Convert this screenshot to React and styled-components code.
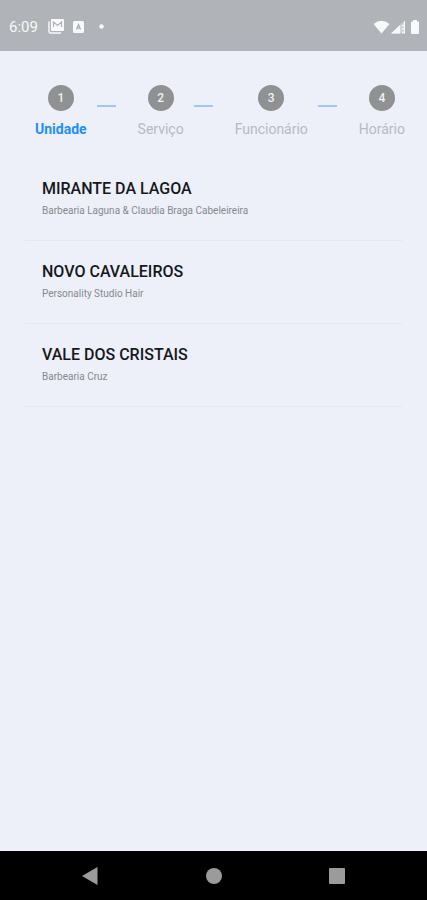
import React, { Fragment } from "react";
import styled, { createGlobalStyle } from "styled-components";

const GlobalStyle = createGlobalStyle`
  * { box-sizing: border-box; }
  body {
    margin: 0;
    background: #edf0f8;
    font-family: Roboto, "Liberation Sans", sans-serif;
  }
`;

const Screen = styled.div`
  display: flex;
  flex-direction: column;
  min-height: 100vh;
  background: #edf0f8;
`;

const StatusBar = styled.header`
  display: flex;
  align-items: center;
  justify-content: space-between;
  height: 51px;
  padding: 2px 7px 0 9px;
  background: #b0b3b7;
  color: #f8f9fa;
`;

const StatusGroup = styled.div`
  display: flex;
  align-items: center;
  gap: ${(p) => p.$gap}px;
`;

const Clock = styled.time`
  margin-right: 1px;
  font-size: 15px;
  line-height: 18px;
`;

const Icon = styled.svg`
  display: block;
  flex: none;
  fill: currentColor;
`;

const Main = styled.main`
  flex: 1;
`;

const Stepper = styled.nav`
  display: flex;
  padding: 34px 22px 0 35px;
`;

const Step = styled.button`
  display: flex;
  flex-direction: column;
  align-items: center;
  gap: 9px;
  padding: 0;
  border: 0;
  background: none;
  font-family: inherit;
  font-size: 14px;
  line-height: 18px;
  font-weight: ${(p) => (p.$active ? 700 : 400)};
  color: ${(p) => (p.$active ? "#1f8ff5" : "#b7babf")};
`;

const StepNumber = styled.span`
  display: grid;
  place-items: center;
  width: 26px;
  height: 26px;
  border-radius: 50%;
  background: #8f9193;
  color: #f0f2f5;
  font-size: 12px;
  font-weight: 500;
`;

const Connector = styled.span`
  flex: 1;
  padding: 20px 22px 0 10px;

  &::after {
    content: "";
    display: block;
    height: 2px;
    background: #9cc8f8;
  }
`;

const UnitList = styled.ul`
  margin: 20px 25px 0;
  padding: 0;
  list-style: none;
`;

const UnitItem = styled.li`
  border-bottom: 1px solid #e4e7eb;
`;

const UnitButton = styled.button`
  display: block;
  width: 100%;
  padding: 21px 17px 22px;
  border: 0;
  background: none;
  font-family: inherit;
  text-align: left;
`;

const UnitName = styled.span`
  display: block;
  font-size: 16px;
  line-height: 20px;
  font-weight: 500;
  color: #15181c;
`;

const UnitDetail = styled.span`
  display: block;
  margin-top: 5px;
  font-size: 10px;
  line-height: 14px;
  color: #858990;
`;

const NavBar = styled.footer`
  display: grid;
  grid-template-columns: 1fr 26px 1fr;
  align-items: center;
  height: 49px;
  padding: 0 80px;
  background: #000;
`;

const NavButton = styled.button`
  display: grid;
  place-items: center;
  justify-self: ${(p) => p.$side};
  width: 20px;
  height: 24px;
  padding: 0;
  border: 0;
  background: none;
  color: #9b9b9b;
`;

const steps = ["Unidade", "Serviço", "Funcionário", "Horário"];

const units = [
  { name: "MIRANTE DA LAGOA", detail: "Barbearia Laguna & Claudia Braga Cabeleireira" },
  { name: "NOVO CAVALEIROS", detail: "Personality Studio Hair" },
  { name: "VALE DOS CRISTAIS", detail: "Barbearia Cruz" },
];

export default function App() {
  return (
    <Screen>
      <GlobalStyle />
      <StatusBar>
        <StatusGroup $gap={9}>
          <Clock>6:09</Clock>
          <Icon width="16" height="15" viewBox="0 0 16 15" aria-hidden="true">
            <path d="M4 0h11q1 0 1 1v10q0 1-1 1H4q-1 0-1-1V1q0-1 1-1z" />
            <path d="M5.500 8V3l4 3.500 4-3.500v5" fill="none" stroke="#b0b3b7" strokeWidth="1.200" />
            <path d="M1 2.500v10q0 1.500 1.500 1.500H13" fill="none" stroke="currentColor" strokeWidth="1.400" />
          </Icon>
          <Icon width="11" height="12" viewBox="0 0 11 12" aria-hidden="true">
            <rect width="11" height="12" rx="1.500" />
            <path d="M3.500 8.500l2-5 2 5M4 7h3" fill="none" stroke="#a5a8ac" strokeWidth="1.200" />
          </Icon>
          <Icon width="17" height="6" viewBox="0 0 17 6" aria-hidden="true">
            <circle cx="8.500" cy="2.500" r="2.200" />
          </Icon>
        </StatusGroup>
        <StatusGroup $gap={1}>
          <Icon width="17" height="14" viewBox="0 0 17 14" aria-hidden="true">
            <path d="M8.500 13.500L.5 4Q8.500-2.500 16.500 4z" />
          </Icon>
          <Icon width="15" height="14" viewBox="0 0 15 14" aria-hidden="true">
            <path d="M0 13.500L14 .5v13z" opacity=".5" />
            <path d="M0 13.500L9 5v8.500z" />
            <path d="M11 5.500h2.500M11 9h2.500M11 12.800h2.500M13.500 1v12.500" fill="none" stroke="currentColor" />
          </Icon>
          <Icon width="13" height="14" viewBox="0 0 13 14" aria-hidden="true">
            <path d="M6 0h4v1.500h1q1 0 1 1V13q0 1-1 1H5q-1 0-1-1V2.500q0-1 1-1h1z" />
          </Icon>
        </StatusGroup>
      </StatusBar>

      <Main>
        <Stepper aria-label="Etapas">
          {steps.map((label, i) => (
            <Fragment key={label}>
              {i > 0 && <Connector />}
              <Step type="button" $active={i === 0} aria-current={i === 0 ? "step" : undefined}>
                <StepNumber>{i + 1}</StepNumber>
                {label}
              </Step>
            </Fragment>
          ))}
        </Stepper>

        <UnitList>
          {units.map((unit) => (
            <UnitItem key={unit.name}>
              <UnitButton type="button">
                <UnitName>{unit.name}</UnitName>
                <UnitDetail>{unit.detail}</UnitDetail>
              </UnitButton>
            </UnitItem>
          ))}
        </UnitList>
      </Main>

      <NavBar>
        <NavButton type="button" $side="start" aria-label="Voltar">
          <Icon width="16" height="18" viewBox="0 0 16 18">
            <path d="M0 9L15.500 0v18z" />
          </Icon>
        </NavButton>
        <NavButton type="button" $side="center" aria-label="Início">
          <Icon width="16" height="16" viewBox="0 0 16 16">
            <circle cx="8" cy="8" r="8" />
          </Icon>
        </NavButton>
        <NavButton type="button" $side="end" aria-label="Recentes">
          <Icon width="16" height="16" viewBox="0 0 16 16">
            <rect width="16" height="16" rx="1" />
          </Icon>
        </NavButton>
      </NavBar>
    </Screen>
  );
}
